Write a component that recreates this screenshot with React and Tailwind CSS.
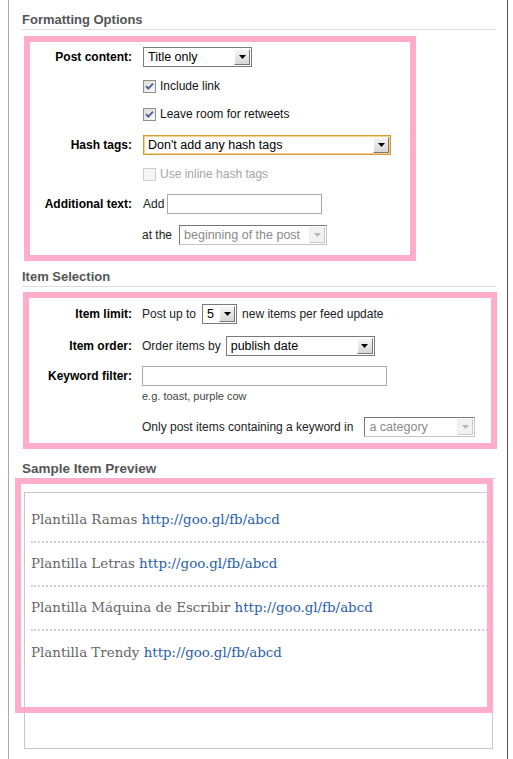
import React from "react";

const Arrow = ({ disabled }) => (
  <span
    className={`flex items-center justify-center w-[16px] h-[16px] mr-[1px] border ${
      disabled
        ? "border-t-[#eee] border-l-[#eee] border-r-[#c8c8c8] border-b-[#c8c8c8] bg-[#f2f2f2]"
        : "border-t-[#fff] border-l-[#fff] border-r-[#777] border-b-[#777] bg-gradient-to-b from-[#f4f4f4] to-[#d8d8d8]"
    }`}
  >
    <svg width="7" height="4" viewBox="0 0 7 4">
      <path d="M0 0h7L3.5 4z" fill={disabled ? "#b5b5b5" : "#000"} />
    </svg>
  </span>
);

const Select = ({ text, w, disabled, focus }) => (
  <span
    className={`inline-flex items-center h-[20px] bg-white border ${w} ${
      focus
        ? "border-[#d49a35] shadow-[inset_0_0_0_1px_#f6d48f]"
        : disabled
        ? "border-t-[#777] border-l-[#777] border-r-[#c5c5c5] border-b-[#c5c5c5]"
        : "border-[#7a7a7a]"
    }`}
  >
    <span className={`flex-1 pl-[4px] truncate text-[12.5px] ${disabled ? "text-[#8a8a8a]" : "text-black"}`}>
      {text}
    </span>
    <Arrow disabled={disabled} />
  </span>
);

const Input = ({ w }) => <span className={`inline-block h-[20px] bg-white border border-[#aaa] ${w}`} />;

const Check = ({ checked, disabled, label }) => (
  <span className="flex items-center">
    <span
      className={`flex items-center justify-center w-[13px] h-[13px] border ${
        disabled ? "border-[#cfcfcf] bg-[#f5f5f5]" : "border-[#8f8f8f] bg-gradient-to-br from-[#dcdcdc] to-[#fafafa]"
      }`}
    >
      {checked && (
        <svg width="9" height="9" viewBox="0 0 9 9">
          <path d="M1 4.2l2.3 2.4L8 1.6" stroke="#4a5d96" strokeWidth="1.8" fill="none" />
        </svg>
      )}
    </span>
    <span className={`ml-[4px] text-[12px] ${disabled ? "text-[#a5a5a5]" : "text-[#111]"}`}>{label}</span>
  </span>
);

const Row = ({ label, w, className, gap = "gap-[5px]", children }) => (
  <div className={`flex items-center h-[20px] ${className}`}>
    <span className={`${w} shrink-0 text-right text-[12px] font-bold text-black`}>{label}</span>
    <div className={`flex items-center ${gap} text-[12px] text-[#222]`}>{children}</div>
  </div>
);

const Heading = ({ children, className, size = "text-[13px]" }) => (
  <div className={`border-b border-[#ddd] pb-[2px] w-[474px] ${className}`}>
    <h2 className={`${size} leading-[15px] font-bold text-[#555]`}>{children}</h2>
  </div>
);

const items = ["Plantilla Ramas", "Plantilla Letras", "Plantilla Máquina de Escribir", "Plantilla Trendy"];

export default function App() {
  return (
    <div className="w-[513px] h-[759px] overflow-hidden bg-white font-['Liberation_Sans',Arial,sans-serif]">
      <div className="ml-[8px] w-[500px] h-full border-l border-l-[#a8a8a8] border-r border-r-[#555] pl-[13px]">
        <Heading className="pt-[12px]">Formatting Options</Heading>

        <div className="ml-[2px] mt-[6px] w-[392px] border-[6px] border-[#ffadcb] pt-[5px] pb-[10px]">
          <Row label="Post content:" w="w-[102px] mr-[11px]">
            <Select text="Title only" w="w-[109px]" />
          </Row>
          <Row label="" w="w-[102px] mr-[11px]" className="mt-[9px]">
            <Check checked label="Include link" />
          </Row>
          <Row label="" w="w-[102px] mr-[11px]" className="mt-[8px]">
            <Check checked label="Leave room for retweets" />
          </Row>
          <Row label="Hash tags:" w="w-[102px] mr-[11px]" className="mt-[11px]">
            <Select text="Don't add any hash tags" w="w-[248px]" focus />
          </Row>
          <Row label="" w="w-[102px] mr-[11px]" className="mt-[9px]">
            <Check disabled label="Use inline hash tags" />
          </Row>
          <Row label="Additional text:" w="w-[102px] mr-[11px]" className="mt-[10px]" gap="gap-[3px]">
            <span>Add</span>
            <Input w="w-[155px]" />
          </Row>
          <Row label="" w="w-[102px] mr-[10px]" className="mt-[11px]">
            <span>at the</span>
            <Select text="beginning of the post" w="w-[148px] ml-[2px]" disabled />
          </Row>
        </div>

        <Heading className="mt-[8px]">Item Selection</Heading>

        <div className="ml-[1px] mt-[5px] w-[474px] border-[6px] border-[#ffadcb] pt-[6px] pb-[6px]">
          <Row label="Item limit:" w="w-[103px] mr-[10px]">
            <span className="mr-[1px]">Post up to</span>
            <Select text="5" w="w-[35px]" />
            <span>new items per feed update</span>
          </Row>
          <Row label="Item order:" w="w-[103px] mr-[10px]" className="mt-[12px]">
            <span>Order items by</span>
            <Select text="publish date" w="w-[149px]" />
          </Row>
          <Row label="Keyword filter:" w="w-[103px] mr-[10px]" className="mt-[10px]">
            <Input w="w-[245px]" />
          </Row>
          <div className="ml-[113px] mt-[4px] text-[11px] leading-[13px] text-[#444]">e.g. toast, purple cow</div>
          <div className="ml-[113px] mt-[14px] flex items-center h-[20px] gap-[11px] text-[12px] text-[#222]">
            <span>Only post items containing a keyword in</span>
            <Select text="a category" w="w-[111px]" disabled />
          </div>
        </div>

        <div className="relative">
          <Heading className="mt-[12px]" size="text-[13.5px]">Sample Item Preview</Heading>
          <div className="ml-[2px] mt-[13px] w-[469px] h-[257px] border border-[#c8c8c8] pt-[6px] pl-[6px] font-['DejaVu_Serif',Georgia,serif] text-[13.4px]">
            {items.map((t, i) => (
              <div
                key={t}
                className={`h-[44px] flex items-center ${i < 3 ? "border-b-2 border-dotted border-[#cfcfcf]" : ""}`}
              >
                <span className="text-[#666]">
                  {t}{" "}
                  <span className="text-[#1f5ea8]">http://goo.gl/fb/abcd</span>
                </span>
              </div>
            ))}
          </div>
          <div className="pointer-events-none absolute left-[-7px] top-[17px] w-[478px] h-[235px] border-[6px] border-[#ffadcb]" />
        </div>
      </div>
    </div>
  );
}
